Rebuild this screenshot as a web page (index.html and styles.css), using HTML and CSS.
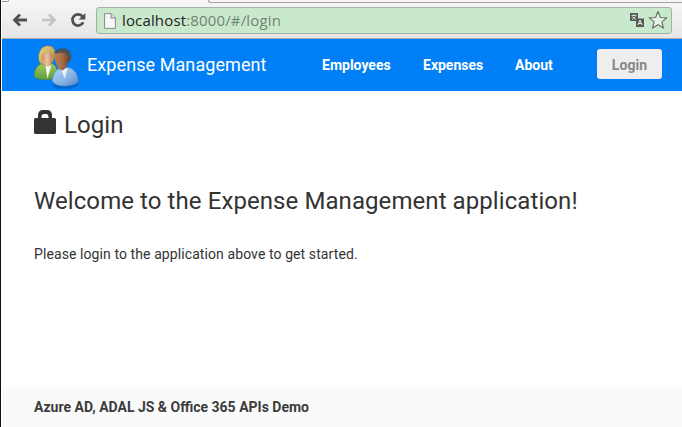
FILE: index.html
```html
<!DOCTYPE html>
<html lang="en">
<head>
<meta charset="utf-8">
<title>Expense Management</title>
<link rel="stylesheet" href="styles.css">
</head>
<body>
<div class="window">
  <div class="tabstrip"><span class="tab"></span><span class="tabs-rest"></span></div>
  <div class="toolbar">
    <svg class="nav-icon" width="16" height="16" viewBox="0 0 16 16"><path d="M15 8H3M8 2.500 2.500 8 8 13.500" fill="none" stroke="#505050" stroke-width="2.800"/></svg>
    <svg class="nav-icon" width="16" height="16" viewBox="0 0 16 16"><path d="M1 8h12M8 2.500 13.500 8 8 13.500" fill="none" stroke="#c4c4c4" stroke-width="2.600"/></svg>
    <svg class="nav-icon reload" width="16" height="16" viewBox="0 0 16 16"><path d="M12.600 4.600A5.600 5.600 0 1 0 13.200 10.200" fill="none" stroke="#505050" stroke-width="2.700"/><path d="M15.300 1v6.500H8.700z" fill="#505050"/></svg>
    <div class="address">
      <svg class="page-icon" width="12" height="16" viewBox="0 0 12 16"><path d="M.6.6h6.400l4.400 4.400v10.400H.6z" fill="#f8f8f8" stroke="#888"/><path d="M7 .6V5h4.400" fill="#ddd" stroke="#888"/></svg>
      <span class="url">localhost<span class="path">:8000/#/login</span></span>
      <svg class="translate" width="14" height="14" viewBox="0 0 14 14"><path d="M0 0h8v8H0zM6 5.500h8V14H6z" fill="#595959"/><path d="M1.500 2.500h5M4 1v1.500M2.300 3.500 5.800 6.500M5.700 3.500 2 6.500" fill="none" stroke="#d5ead5" stroke-width=".9"/><path d="m8 12 2-5 2 5M8.600 10.500h2.800" fill="none" stroke="#e4eee4" stroke-width="1"/></svg>
      <svg class="star" width="20" height="20" viewBox="0 0 20 20"><path d="m10 1.500 2.400 6 6.400.400-4.900 4 1.600 6.200-5.500-3.400-5.500 3.400 1.600-6.200-4.900-4 6.400-.400z" fill="#e4f3e4" stroke="#69736a" stroke-width="1.200" stroke-linejoin="round"/></svg>
    </div>
  </div>
  <header class="header">
    <svg class="logo" width="47" height="45" viewBox="1 0 49 48" preserveAspectRatio="none">
      <defs>
        <linearGradient id="green" x2="0" y2="1"><stop stop-color="#a3cd62"/><stop offset="1" stop-color="#5f9c3c"/></linearGradient>
        <linearGradient id="blue" x2="1" y2="1"><stop stop-color="#b1d4f2"/><stop offset=".6" stop-color="#86b1e2"/><stop offset="1" stop-color="#4f83c5"/></linearGradient>
        <linearGradient id="hair" x2="1" y2="1"><stop stop-color="#e6d994"/><stop offset="1" stop-color="#a88b35"/></linearGradient>
        <linearGradient id="light"><stop stop-color="#c78e69"/><stop offset=".5" stop-color="#edc4a3"/><stop offset="1" stop-color="#b97f5e"/></linearGradient>
        <linearGradient id="dark"><stop stop-color="#ba8158"/><stop offset=".5" stop-color="#a66d48"/><stop offset="1" stop-color="#6b3e27"/></linearGradient>
        <filter id="soft" x="-20%" y="-20%" width="140%" height="140%"><feGaussianBlur stdDeviation="1"/></filter>
      </defs>
      <path d="M21 43c2 5 23 5 26-2l-2-12z" fill="#003d88" opacity=".5" filter="url(#soft)"/>
      <path d="M1 33c0-7 4-12 10-14h6c6 1 9 6 9 15-5 4-23 4-25-1" fill="url(#green)" stroke="#578933" stroke-width=".7"/>
      <path d="m13 22 2 14 4-14z" fill="#f2f4ef"/>
      <path d="M7 19C4 14 6 2 14 1c8-1 11 5 7 17-3 3-9 5-14 1" fill="url(#hair)" stroke="#8c7938" stroke-width=".6"/>
      <path d="M9 10c4 1 7-1 9-3 2 2 3 3 2 8-1 6-3 8-5 8-3-1-6-5-6-13" fill="url(#light)"/>
      <path d="M20 38c1-8 4-12 10-14h7c7 2 10 8 10 15-4 6-24 7-27-1" fill="url(#blue)" stroke="#5a8fc8" stroke-width=".7"/>
      <path d="m29 25 4 11 3-11z" fill="#e9f1f7"/>
      <path d="M23 8c2-5 14-6 16 1 1 4 0 7-2 10L24 12z" fill="#525357" stroke="#3d454d" stroke-width=".5"/>
      <path d="M23 9c5-1 8-1 11 0l2 4 2-1c1 3-1 6-2 6-1 5-3 9-6 9-3 0-5-4-6-8-2-4-2-7-1-10" fill="url(#dark)"/>
    </svg>
    <span class="brand">Expense Management</span>
    <nav class="nav"><a class="employees">Employees</a><a class="expenses">Expenses</a><a class="about">About</a></nav>
    <button class="login">Login</button>
  </header>
  <main class="content">
    <h1 class="title"><svg class="lock" width="22" height="24" viewBox="0 0 22 24"><path fill-rule="evenodd" d="M1.500 8H4V5.500Q4 0 9 0h4Q18 0 18 5.500V8h2.500Q22 8 22 9.500v13q0 1.500-1.500 1.500h-19Q0 24 0 22.500v-13Q0 8 1.500 8M7.500 8h7V6.500Q14.500 4 12.500 4h-3Q7.500 4 7.500 6.500z" fill="#333"/></svg><span>Login</span></h1>
    <h2 class="welcome">Welcome to the Expense Management application!</h2>
    <p class="intro">Please login to the application above to get started.</p>
  </main>
  <footer class="footer"><span class="foot-text">Azure AD, ADAL JS &amp; Office 365 APIs Demo</span></footer>
</div>
</body>
</html>
```
FILE: styles.css
```css
* { box-sizing: border-box; }
body { margin: 0; font-family: Roboto, sans-serif; color: #333; background: #fff; }
.window { height: 427px; display: flex; flex-direction: column; border-left: 1px solid #111; padding-left: 1px; overflow: hidden; white-space: nowrap; }
.tabstrip { height: 3px; display: flex; background: #f5f5f5; }
.tab { width: 7px; height: 2px; border: 1px solid #999; border-width: 0 1px 1px 0; border-radius: 0 0 4px; }
.tabs-rest { margin-left: 199px; flex: 1; border-bottom: 1px solid #a2a2a2; border-left: 1px solid #a2a2a2; border-radius: 0 0 0 4px; }
.toolbar { height: 36px; display: flex; align-items: center; padding: 0 10px; background: linear-gradient(#f5f5f5, #e6e6e6); border-bottom: 1px solid #aaa; }
.nav-icon { flex: none; margin: 0 13px 1px 0; }
.reload { margin-right: 10px; }
.address { height: 27px; width: 576px; border: 1px solid #a3b3a3; border-radius: 3px; background: #c9e9cd; display: flex; align-items: center; padding-left: 7px; }
.url { margin: -2px 0 0 6px; font: 15px/22px "Open Sans", sans-serif; letter-spacing: .15px; color: #222; }
.path { color: #718373; }
.translate { margin: 0 0 2px auto; }
.star { margin: 0 3px 1px 4px; }
.header { height: 52px; flex: none; background: #007ff6; display: flex; align-items: center; padding: 0 20px 0 32px; color: #fff; }
.logo { margin-top: 5px; flex: none; }
.brand { width: 230px; margin: -2px 0 0 6px; font-size: 18px; letter-spacing: .08px; }
.nav { display: flex; font-size: 14px; font-weight: 700; }
.employees { width: 101px; margin-left: 5px; }
.expenses { width: 92px; }
.login { width: 65px; height: 30px; margin: 0 0 2px auto; padding: 2px 0 0; border: 0; border-radius: 3px; background: #eee; color: #888; font: 700 14px Roboto, sans-serif; letter-spacing: .1px; }
.content { flex: 1; padding: 16px 32px 0; }
.title, .welcome { margin: 0; font-weight: 400; font-size: 24px; line-height: 36px; letter-spacing: .08px; }
.title { display: flex; }
.lock { margin: 3px 8px 0 0; }
.welcome { margin-top: 40px; }
.intro { margin: 25px 0 0; font-size: 14px; line-height: 20px; letter-spacing: .09px; }
.footer { height: 40px; flex: none; padding: 0 32px; background: #fafafa; color: #3c3c3c; font-size: 14px; font-weight: 700; line-height: 40px; }
```
